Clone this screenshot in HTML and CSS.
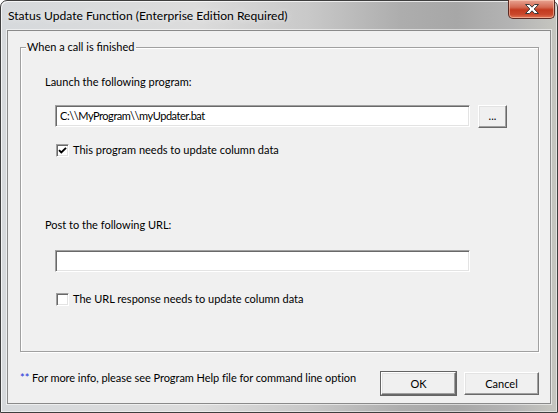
FILE: index.html
```html
<!DOCTYPE html>
<html>
<head>
<meta charset="utf-8">
<link rel="stylesheet" href="styles.css">
</head>
<body>
<div class="window">
  <div class="titlebar">
    <span class="title">Status Update Function (Enterprise Edition Required)</span>
    <div class="close">
      <svg width="16" height="12" viewBox="0 0 16 12">
        <path d="M1.5 1.5h4l2.5 2.7 2.5-2.7h4l-4.3 4.5 4.3 4.5h-4l-2.5-2.7-2.5 2.7h-4l4.3-4.5z" fill="#fff" stroke="#3a3a3a" stroke-width="1" stroke-linejoin="round"/>
      </svg>
    </div>
  </div>
  <div class="client">
    <div class="group">
      <span class="legend">When a call is finished</span>
      <div class="label first">Launch the following program:</div>
      <div class="row">
        <div class="textbox">C:\\MyProgram\\myUpdater.bat</div>
        <div class="btn browse">...</div>
      </div>
      <div class="check c1">
        <span class="box">
          <svg width="9" height="9" viewBox="0 0 9 9"><path d="M1 4.2l2.3 2.3 4.7-4.7" fill="none" stroke="#000" stroke-width="1.9"/></svg>
        </span>
        <span>This program needs to update column data</span>
      </div>
      <div class="label second">Post to the following URL:</div>
      <div class="row r2">
        <div class="textbox"></div>
      </div>
      <div class="check c2">
        <span class="box"></span>
        <span>The URL response needs to update column data</span>
      </div>
    </div>
    <div class="footer">
      <span class="note"><span class="stars">**</span> For more info, please see Program Help file for command line option</span>
      <div class="btn action default">OK</div>
      <div class="btn action">Cancel</div>
    </div>
  </div>
</div>
</body>
</html>
```

FILE: styles.css
```css
* { box-sizing: border-box; }
html, body { margin: 0; padding: 0; background: #fff; }
body {
  font-family: "Lato", "Open Sans", sans-serif;
  font-size: 11px;
  color: #000;
}
.window {
  width: 558px;
  height: 413px;
  border: 1px solid #3e3e3e;
  border-radius: 7px 7px 0 0;
  background:
    linear-gradient(90deg, #d6d9dc 0%, #dcdcdc 35%, #c9c9c9 55%, #adadad 72%, #a7a7a7 82%, #b4b4b4 92%, #c6c6c0 100%);
  box-shadow: inset 1px 1px 0 rgba(255,255,255,0.7), inset -1px -1px 0 rgba(255,255,255,0.5);
  display: flex;
  flex-direction: column;
  padding: 0 6px 8px 6px;
}
.titlebar {
  height: 29px;
  display: flex;
  justify-content: space-between;
  align-items: flex-start;
  margin-right: -4px;
}
.title {
  margin-left: 1px;
  margin-top: 7px;
  line-height: 16px;
  font-size: 12.1px;
  color: #000;
  white-space: nowrap;
  text-shadow: 0 0 6px rgba(255,255,255,0.8);
}
.close {
  width: 47px;
  height: 19px;
  margin-top: -1px;
  border: 1px solid #5b2a23;
  border-top: none;
  border-radius: 0 0 5px 5px;
  background: linear-gradient(180deg, #e8a493 0%, #d46a53 40%, #c33a1f 55%, #c9472b 80%, #e27555 100%);
  box-shadow: inset 0 0 0 1px rgba(255,220,200,0.5);
  display: flex;
  align-items: center;
  justify-content: center;
  padding-left: 1px;
}
.close svg { display: block; }
.client {
  flex: 1;
  background: #f0f0f0;
  border: 1px solid #8a8a8a;
  box-shadow: 0 0 0 1px rgba(255,255,255,0.55);
  display: flex;
  flex-direction: column;
}
.group {
  position: relative;
  margin: 16px 0 0 12px;
  width: 519px;
  height: 305px;
  border: 1px solid #a0a0a0;
  box-shadow: 1px 1px 0 #fff, inset 1px 1px 0 #fff;
  display: flex;
  flex-direction: column;
}
.legend {
  position: absolute;
  left: 5px;
  top: -9px;
  line-height: 16px;
  padding: 0 2px 0 1px;
  background: #f0f0f0;
  white-space: nowrap;
}
.label { line-height: 16px; margin-left: 24px; white-space: nowrap; }
.label.first { margin-top: 26px; }
.label.second { margin-top: 59px; }
.row {
  display: flex;
  gap: 8px;
  margin-top: 15px;
  margin-left: 34px;
}
.row.r2 { margin-top: 17px; }
.textbox {
  width: 415px;
  height: 22px;
  background: #fff;
  border: 1px solid;
  border-color: #a0a0a0 #fff #fff #a0a0a0;
  box-shadow: inset 1px 1px 0 #696969, inset -1px -1px 0 #e3e3e3;
  padding: 0 4px 0 4px;
  line-height: 20px;
  white-space: nowrap;
  font-size: 11px;
  letter-spacing: -0.45px;
}
.btn {
  background: #f0f0f0;
  border: 1px solid;
  border-color: #fff #696969 #696969 #fff;
  box-shadow: inset -1px -1px 0 #a0a0a0, inset 1px 1px 0 #e3e3e3;
  display: flex;
  align-items: center;
  justify-content: center;
  line-height: 16px;
}
.btn.browse {
  width: 29px;
  height: 23px;
  padding-bottom: 2px;
}
.check {
  display: flex;
  align-items: center;
  gap: 4px;
  margin-left: 35px;
  line-height: 16px;
  height: 16px;
  white-space: nowrap;
}
.check.c1 { margin-top: 14px; }
.check.c2 { margin-top: 19px; }
.box {
  width: 13px;
  height: 13px;
  background: #fff;
  border: 1px solid;
  border-color: #a0a0a0 #fff #fff #a0a0a0;
  box-shadow: inset 1px 1px 0 #696969, inset -1px -1px 0 #e3e3e3;
  display: flex;
  align-items: center;
  justify-content: center;
}
.box svg { display: block; }
.footer {
  display: flex;
  align-items: flex-start;
  margin-top: 18px;
  padding: 0 11px 0 12px;
}
.note { line-height: 16px; margin-right: auto; white-space: nowrap; letter-spacing: -0.05px; }
.stars { color: #1a2fd8; }
.btn.action {
  width: 75px;
  height: 23px;
  margin-top: 2px;
}
.btn.default {
  margin-right: 8px;
  outline: 1px solid #646464;
  outline-offset: 0;
}
```
